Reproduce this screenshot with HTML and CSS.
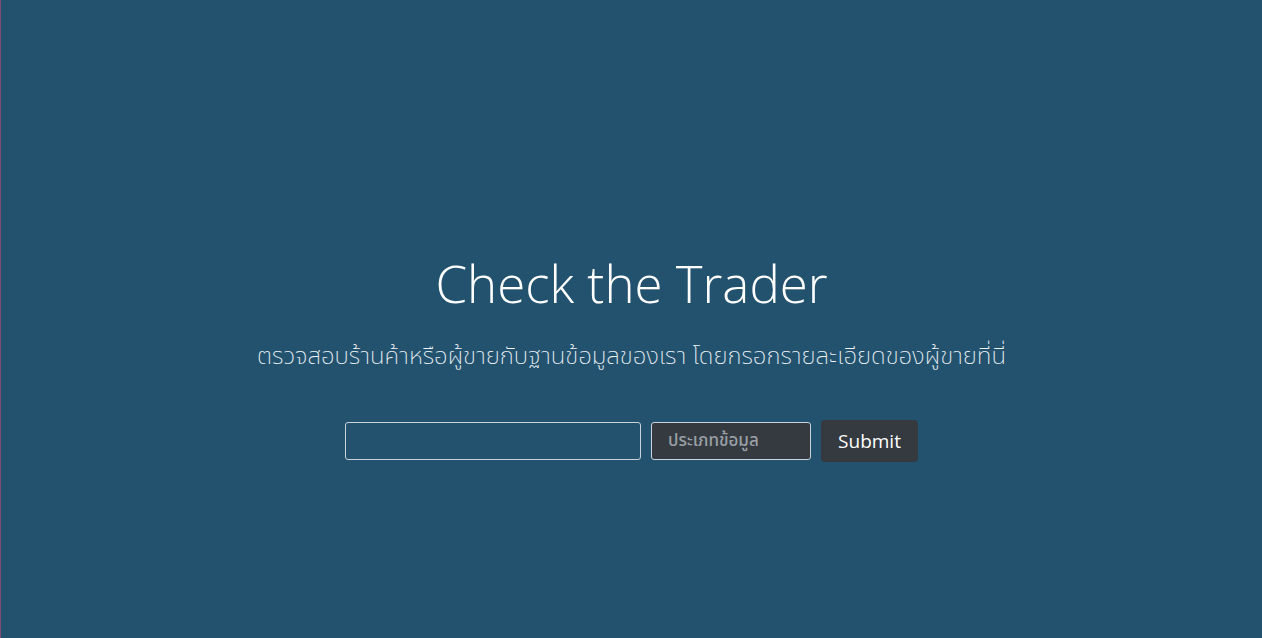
FILE: index.html
```html
<!DOCTYPE html>
<html lang="th">
<head>
<meta charset="utf-8">
<title>Check the Trader</title>
<link rel="stylesheet" href="styles.css">
</head>
<body>
<main class="hero">
  <h1 class="title">Check the Trader</h1>
  <p class="lead">ตรวจสอบร้านค้าหรือผู้ขายกับฐานข้อมูลของเรา โดยกรอกรายละเอียดของผู้ขายที่นี่</p>
  <form class="search">
    <input class="field" type="text">
    <div class="select">ประเภทข้อมูล</div>
    <button class="btn" type="button">Submit</button>
  </form>
</main>
</body>
</html>
```
FILE: styles.css
```css
html, body {
  margin: 0;
  height: 100%;
}
body {
  background: #23526f;
  border-left: 1px solid #7a4f73;
  box-sizing: border-box;
  font-family: "Open Sans", "Noto Sans Thai", "Noto Sans", sans-serif;
  color: #fff;
}
.hero {
  height: 100%;
  display: flex;
  flex-direction: column;
  align-items: center;
  padding-top: 245px;
  box-sizing: border-box;
}
.title {
  margin: 0;
  font-weight: 300;
  font-size: 51px;
  line-height: 76px;
}
.lead {
  margin: 18px 0 0;
  font-family: "Noto Sans Thai", "Noto Sans Thai UI", "Open Sans", sans-serif;
  font-weight: 200;
  font-size: 24px;
  line-height: 36px;
  color: #eef3f6;
}
.search {
  margin-top: 45px;
  display: flex;
  align-items: center;
  gap: 10px;
}
.field {
  width: 296px;
  height: 38px;
  box-sizing: border-box;
  background: transparent;
  border: 1px solid #c8d3da;
  border-radius: 3px;
}
.select {
  width: 160px;
  height: 38px;
  box-sizing: border-box;
  background: #343a40;
  border: 1px solid #c8d3da;
  border-radius: 3px;
  color: #9aa0a6;
  font-family: "Noto Sans Thai", "Open Sans", sans-serif;
  font-size: 17px;
  font-weight: 500;
  padding-left: 16px;
  display: flex;
  align-items: center;
}
.btn {
  width: 97px;
  height: 42px;
  background: #343a40;
  border: none;
  border-radius: 4px;
  color: #fff;
  font-family: "Open Sans", sans-serif;
  font-size: 19px;
}
```
